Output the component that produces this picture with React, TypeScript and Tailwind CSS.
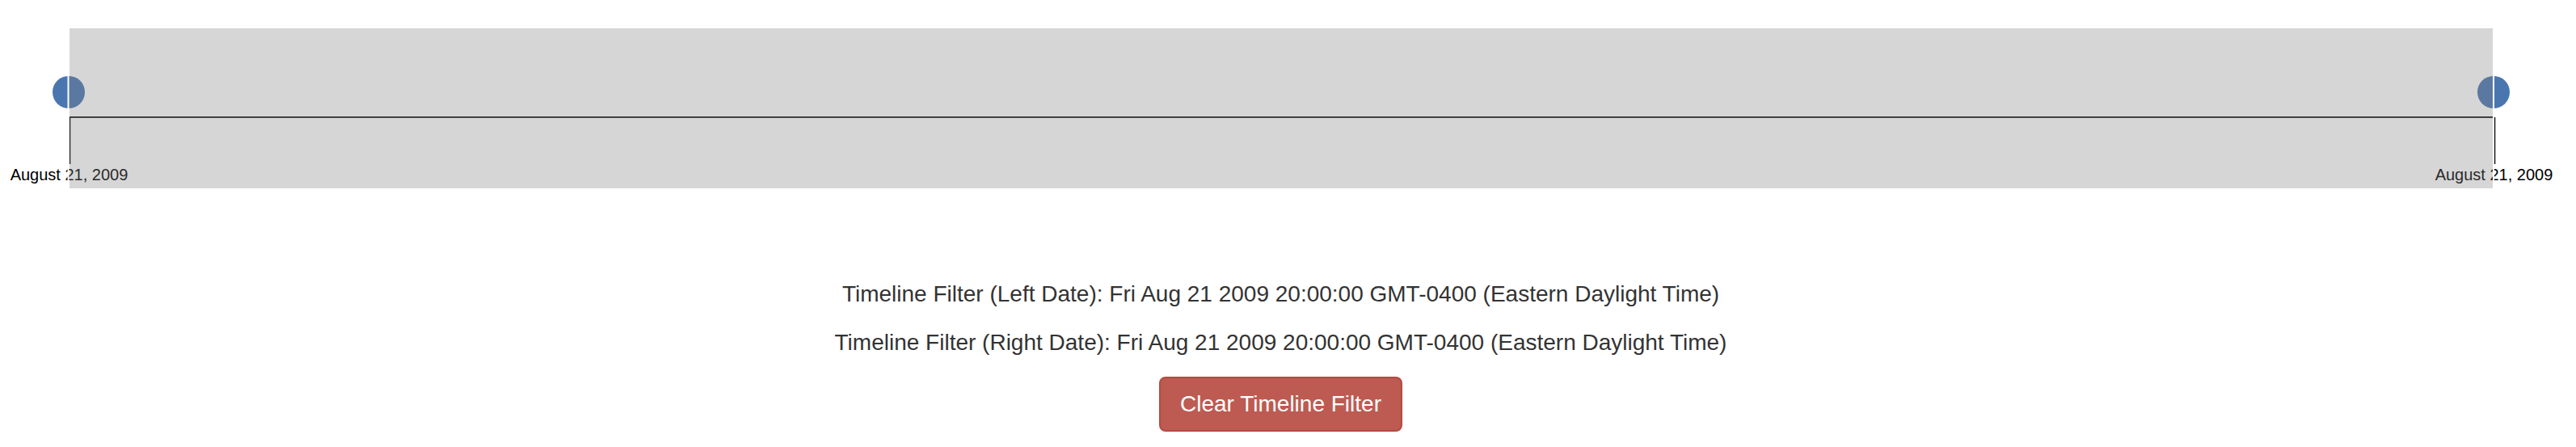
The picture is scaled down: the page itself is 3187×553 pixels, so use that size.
import React from "react";

export default function App() {
  const font = '"Liberation Sans", Arial, Helvetica, sans-serif';
  return (
    <div className="w-[3187px] h-[553px] bg-white overflow-hidden" style={{ fontFamily: font }}>
      <svg width={3187} height={250} className="block">
        <circle cx={85} cy={114} r={20} fill="#4a76b0" />
        <circle cx={3085} cy={114} r={20} fill="#4a76b0" />
        <line x1={86} y1={145} x2={3084} y2={145} stroke="#222" strokeWidth={2} />
        <line x1={86.5} y1={145} x2={86.5} y2={203} stroke="#000" strokeWidth={1.5} />
        <line x1={3086.5} y1={145} x2={3086.5} y2={203} stroke="#000" strokeWidth={1.5} />
        <text x={85.5} y={223} textAnchor="middle" fontSize={20} fill="#000" fontFamily={font}>
          August 21, 2009
        </text>
        <text x={3085.5} y={223} textAnchor="middle" fontSize={20} fill="#000" fontFamily={font}>
          August 21, 2009
        </text>
        <rect x={83.5} y={94} width={2} height={139} fill="#fff" />
        <rect x={3084} y={94} width={2} height={139} fill="#fff" />
        <rect x={86} y={35} width={2998} height={198} fill="rgb(128,128,128)" fillOpacity={0.32} />
      </svg>
      <div className="w-[3169px] flex flex-col items-center pt-[94px] text-[28px] leading-[40px] text-[#333]">
        <p className="mb-[20px]">
          Timeline Filter (Left Date): Fri Aug 21 2009 20:00:00 GMT-0400 (Eastern Daylight Time)
        </p>
        <p className="mb-[22px]">
          Timeline Filter (Right Date): Fri Aug 21 2009 20:00:00 GMT-0400 (Eastern Daylight Time)
        </p>
        <button className="px-[24px] py-[12px] text-[28px] leading-[40px] text-white bg-[#bd5b52] border-2 border-[#b54a40] rounded-[8px]">
          Clear Timeline Filter
        </button>
      </div>
    </div>
  );
}
